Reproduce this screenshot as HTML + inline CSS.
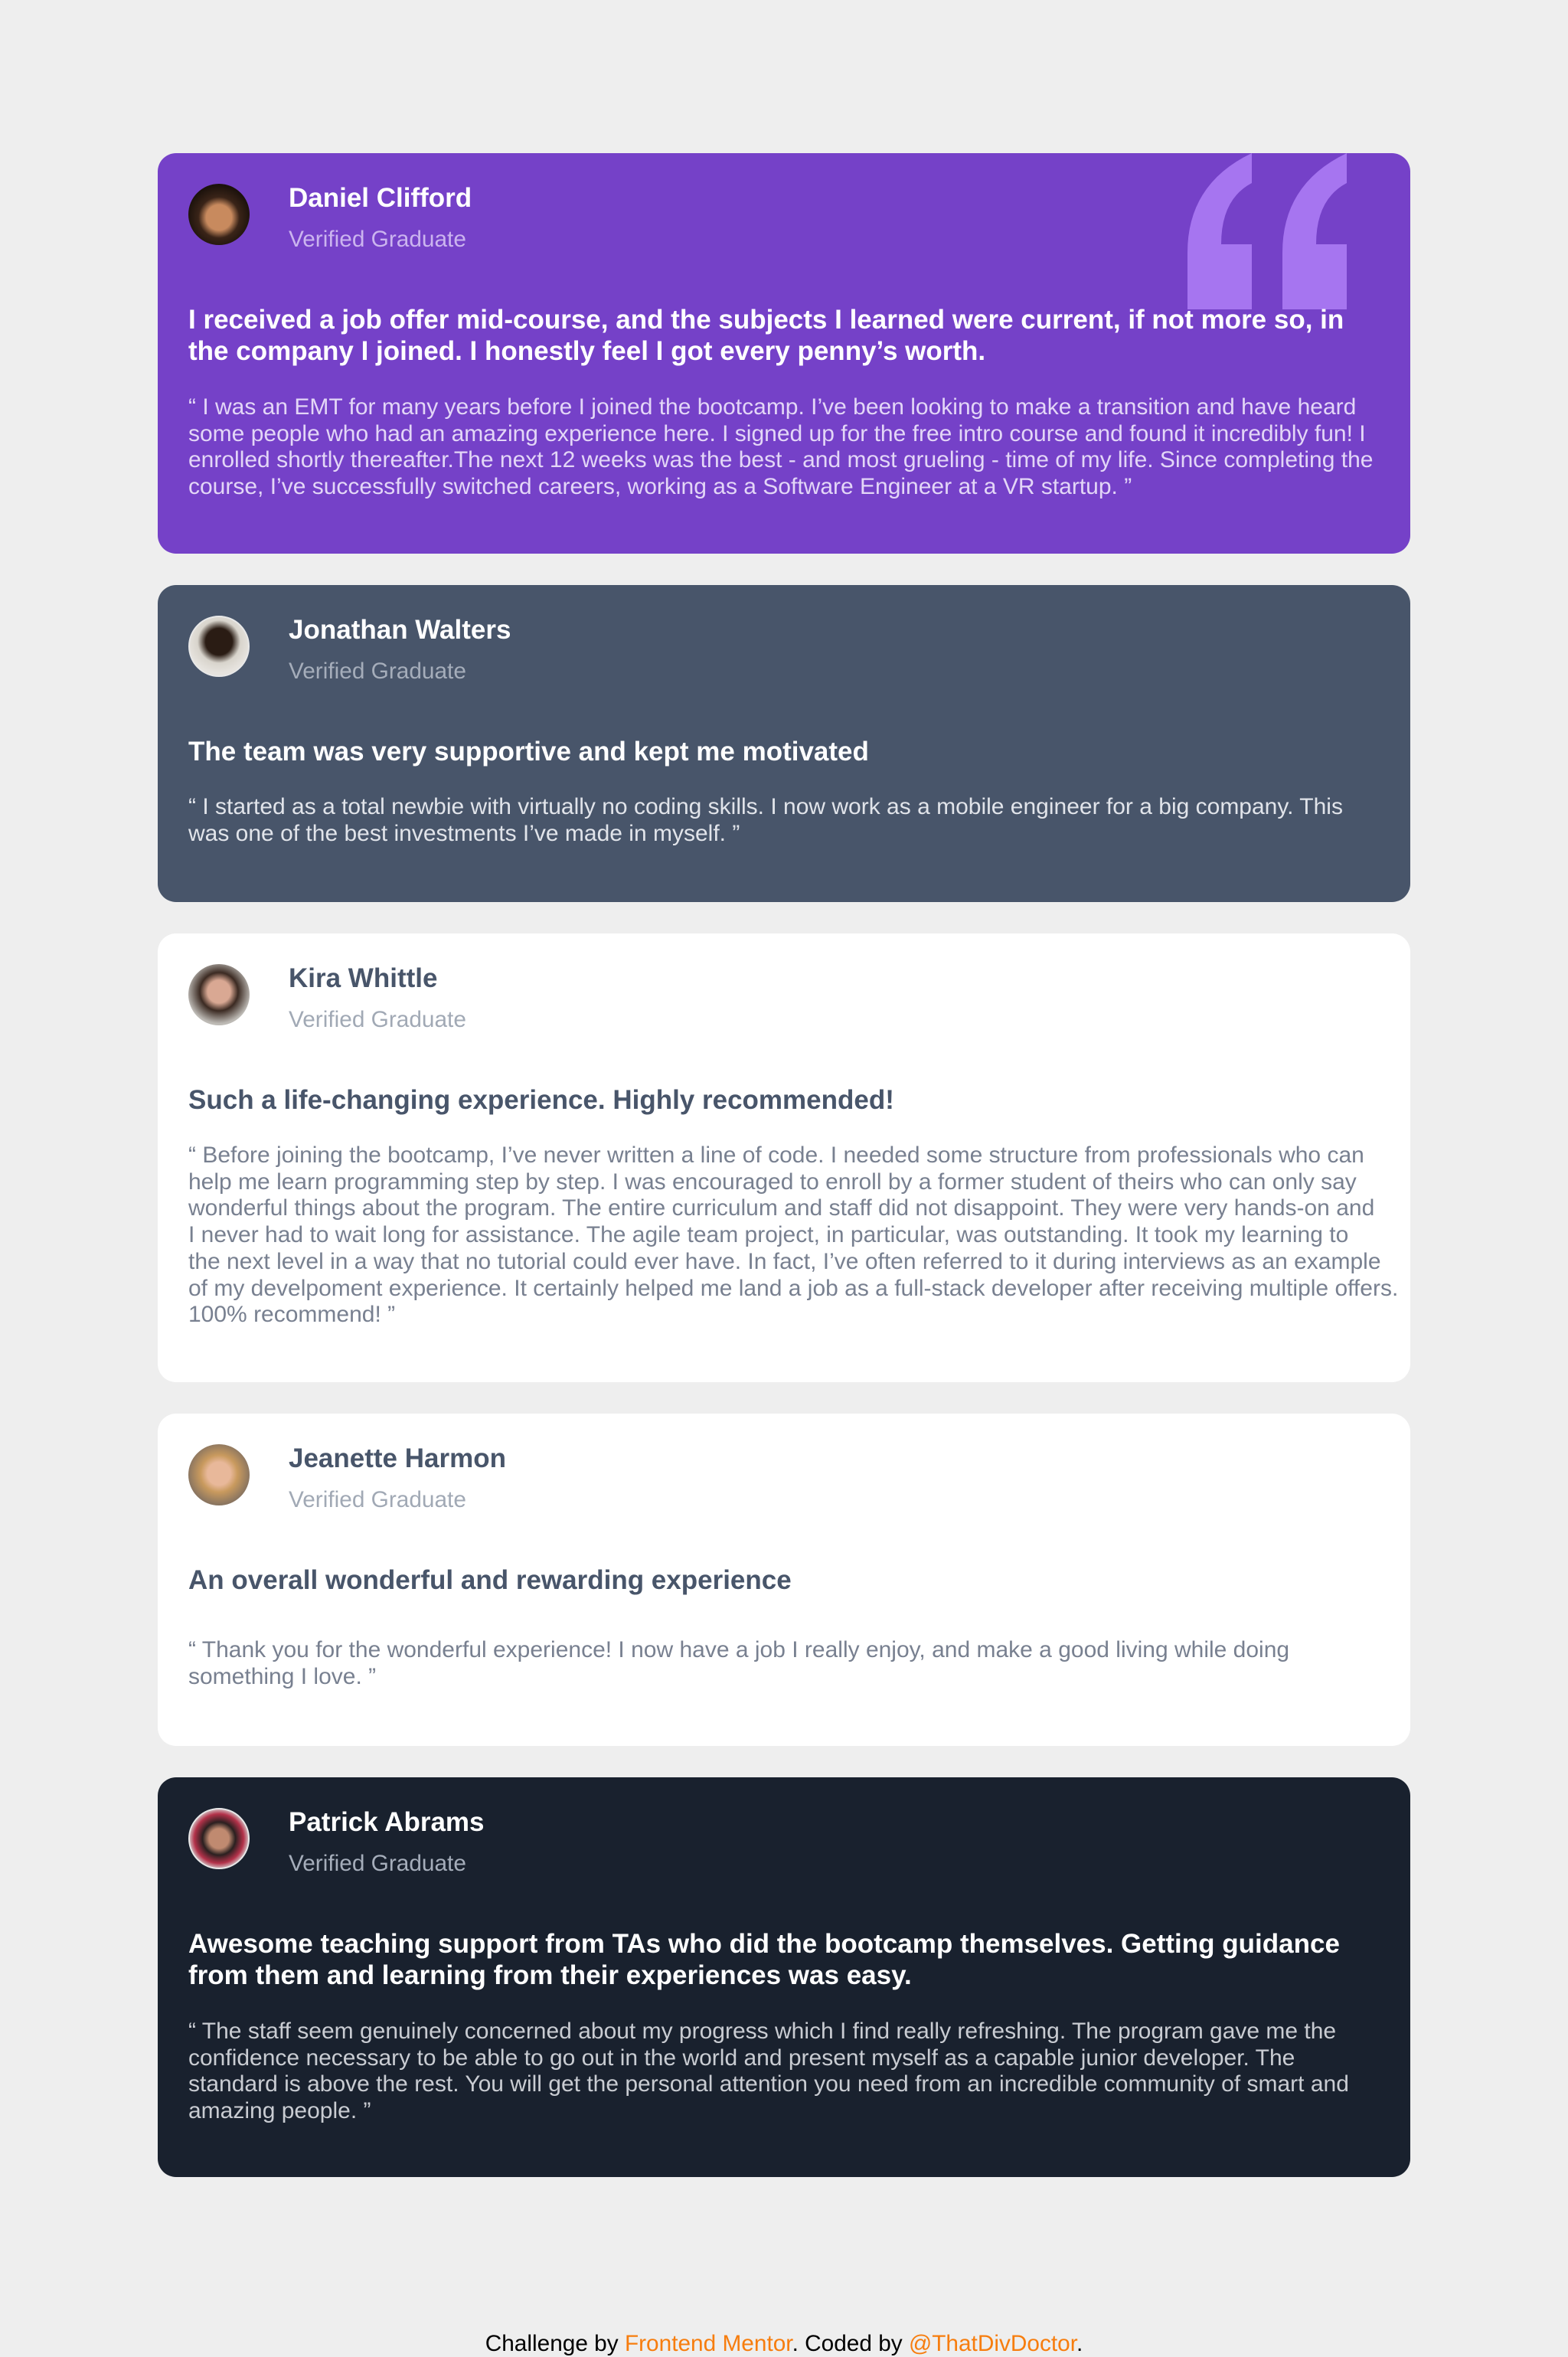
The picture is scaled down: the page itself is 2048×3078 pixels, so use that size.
<!DOCTYPE html>
<html><head><meta charset="utf-8">
<style>
*{margin:0;padding:0;box-sizing:border-box}
html,body{width:2048px;height:3078px;background:#eeeeee;font-family:"Liberation Sans",Arial,sans-serif;overflow:hidden}
.card{position:absolute;left:206px;width:1636px;border-radius:24px;padding:0 40px;white-space:nowrap}
.av{position:absolute;left:40px;top:40px;width:80px;height:80px;border-radius:50%;overflow:hidden}
.name{position:absolute;left:171px;top:40px;font-size:35px;font-weight:bold;line-height:38px}
.ver{position:absolute;left:171px;top:96px;font-size:29.8px;line-height:34px}
.h{position:absolute;left:40px;top:197px;font-size:35px;font-weight:bold;line-height:41px}
.p{position:absolute;left:40px;font-size:30px;line-height:34.7px}
.purple{background:#7541c8;color:#fff}
.purple .ver{color:#cbb4ef}
.purple .p{color:#e3d6f7}
.gray{background:#48556a;color:#fff}
.gray .ver{color:#a5adba}
.gray .p{color:#e1e4ea}
.white{background:#fff;color:#48556a}
.white .ver{color:#a1a9b5}
.white .p{color:#788090}
.dark{background:#19212e;color:#fff}
.dark .ver{color:#a5adba}
.dark .p{color:#c9ccd2}
.foot{position:absolute;top:3044px;left:0;width:2048px;text-align:center;font-size:29.8px;color:#000;line-height:34px}
.foot span{color:#f77d0e}
</style></head><body>

<div class="card purple" style="top:200px;height:523px">
  <svg style="position:absolute;left:1345px;top:0" width="208" height="204" viewBox="0 0 208 204">
    <path fill="#a675f0" d="M84 0 L84 39 Q44 60 44 119 L84 119 L84 204 L0 204 L0 130 Q0 40 84 0Z"/>
    <path fill="#a675f0" d="M208 0 L208 39 Q168 60 168 119 L208 119 L208 204 L124 204 L124 130 Q124 40 208 0Z"/>
  </svg>
  <div class="av" style="background:radial-gradient(circle at 50% 55%,#c88a5e 0 28%,#3a2418 45%,#1c120c 70%)"></div>
  <div class="name">Daniel Clifford</div>
  <div class="ver">Verified Graduate</div>
  <div class="h">I received a job offer mid-course, and the subjects I learned were current, if not more so, in<br>the company I joined. I honestly feel I got every penny’s worth.</div>
  <div class="p" style="top:315px">“ I was an EMT for many years before I joined the bootcamp. I’ve been looking to make a transition and have heard<br>some people who had an amazing experience here. I signed up for the free intro course and found it incredibly fun! I<br>enrolled shortly thereafter.The next 12 weeks was the best - and most grueling - time of my life. Since completing the<br>course, I’ve successfully switched careers, working as a Software Engineer at a VR startup. ”</div>
</div>

<div class="card gray" style="top:764px;height:414px">
  <div class="av" style="border:2px solid #e8e8e8;background:radial-gradient(circle at 50% 42%,#2a1c14 0 30%,#d8d4cc 48%,#e6e3de 70%)"></div>
  <div class="name">Jonathan Walters</div>
  <div class="ver">Verified Graduate</div>
  <div class="h">The team was very supportive and kept me motivated</div>
  <div class="p" style="top:273px">“ I started as a total newbie with virtually no coding skills. I now work as a mobile engineer for a big company. This<br>was one of the best investments I’ve made in myself. ”</div>
</div>

<div class="card white" style="top:1219px;height:586px">
  <div class="av" style="background:radial-gradient(circle at 50% 45%,#d9a893 0 25%,#3b2a22 42%,#bdbab5 70%)"></div>
  <div class="name">Kira Whittle</div>
  <div class="ver">Verified Graduate</div>
  <div class="h">Such a life-changing experience. Highly recommended!</div>
  <div class="p" style="top:273px">“ Before joining the bootcamp, I’ve never written a line of code. I needed some structure from professionals who can<br>help me learn programming step by step. I was encouraged to enroll by a former student of theirs who can only say<br>wonderful things about the program. The entire curriculum and staff did not disappoint. They were very hands-on and<br>I never had to wait long for assistance. The agile team project, in particular, was outstanding. It took my learning to<br>the next level in a way that no tutorial could ever have. In fact, I’ve often referred to it during interviews as an example<br>of my develpoment experience. It certainly helped me land a job as a full-stack developer after receiving multiple offers.<br>100% recommend! ”</div>
</div>

<div class="card white" style="top:1846px;height:434px">
  <div class="av" style="background:radial-gradient(circle at 50% 48%,#e8b89a 0 26%,#c99a5e 42%,#8a7560 70%)"></div>
  <div class="name">Jeanette Harmon</div>
  <div class="ver">Verified Graduate</div>
  <div class="h">An overall wonderful and rewarding experience</div>
  <div class="p" style="top:292px">“ Thank you for the wonderful experience! I now have a job I really enjoy, and make a good living while doing<br>something I love. ”</div>
</div>

<div class="card dark" style="top:2321px;height:522px">
  <div class="av" style="border:2px solid #e8e8e8;background:radial-gradient(circle at 50% 50%,#c08a70 0 24%,#2a2020 40%,#b4324a 60%,#d8d8d8 75%)"></div>
  <div class="name">Patrick Abrams</div>
  <div class="ver">Verified Graduate</div>
  <div class="h">Awesome teaching support from TAs who did the bootcamp themselves. Getting guidance<br>from them and learning from their experiences was easy.</div>
  <div class="p" style="top:315px">“ The staff seem genuinely concerned about my progress which I find really refreshing. The program gave me the<br>confidence necessary to be able to go out in the world and present myself as a capable junior developer. The<br>standard is above the rest. You will get the personal attention you need from an incredible community of smart and<br>amazing people. ”</div>
</div>

<div class="foot">Challenge by <span>Frontend Mentor</span>. Coded by <span>@ThatDivDoctor</span>.</div>
</body></html>
